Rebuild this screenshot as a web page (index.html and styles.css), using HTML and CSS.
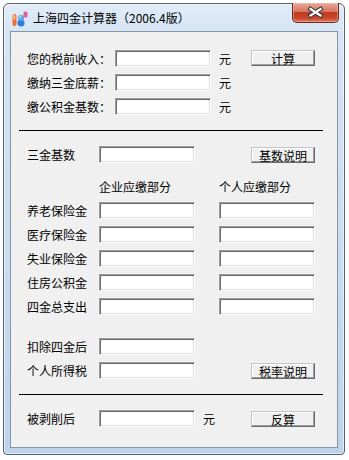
FILE: index.html
```html
<!DOCTYPE html>
<html lang="zh-CN">
<head>
<meta charset="utf-8">
<title>上海四金计算器</title>
<link rel="stylesheet" href="styles.css">
</head>
<body>
<div class="window">
  <div class="titlebar">
    <svg class="app-icon" width="16" height="16" viewBox="0 0 16 16">
      <rect x="0.5" y="3" width="4" height="12" rx="2" fill="#ef6a3a"/>
      <rect x="1.3" y="4" width="2" height="5" rx="1" fill="#ffc07a"/>
      <circle cx="9" cy="12" r="3.6" fill="#2f7fd6"/>
      <circle cx="9" cy="7" r="3" fill="#5aa6ea"/>
      <circle cx="8.2" cy="6.2" r="1" fill="#cfe6fb"/>
      <rect x="11.5" y="0.5" width="4" height="6" rx="1.5" fill="#e0609a"/>
    </svg>
    <span class="title">上海四金计算器（2006.4版）</span>
    <div class="close">
      <svg width="47" height="20" viewBox="0 0 47 20">
        <path d="M18.5 6 L28.5 12.5 M28.5 6 L18.5 12.5" stroke="#3b3b3b" stroke-width="4.4" stroke-linecap="square" fill="none"/>
        <path d="M18.5 6 L28.5 12.5 M28.5 6 L18.5 12.5" stroke="#ffffff" stroke-width="2.2" stroke-linecap="square" fill="none"/>
      </svg>
    </div>
  </div>
  <div class="client">
    <div class="sec-a">
      <div class="row-a"><span class="lbl">您的税前收入：</span><input class="edit" type="text"><span class="unit">元</span><button class="btn">计算</button></div>
      <div class="row-a"><span class="lbl">缴纳三金底薪：</span><input class="edit" type="text"><span class="unit">元</span></div>
      <div class="row-a"><span class="lbl">缴公积金基数：</span><input class="edit" type="text"><span class="unit">元</span></div>
    </div>
    <div class="sep"></div>
    <div class="sec-b">
      <div class="row"><span class="lbl">三金基数</span><input class="edit" type="text"><span></span><button class="btn btn-end">基数说明</button></div>
      <div class="row row-head"><span></span><span class="lbl">企业应缴部分</span><span></span><span class="lbl">个人应缴部分</span></div>
      <div class="row"><span class="lbl">养老保险金</span><input class="edit" type="text"><span></span><input class="edit" type="text"></div>
      <div class="row"><span class="lbl">医疗保险金</span><input class="edit" type="text"><span></span><input class="edit" type="text"></div>
      <div class="row"><span class="lbl">失业保险金</span><input class="edit" type="text"><span></span><input class="edit" type="text"></div>
      <div class="row"><span class="lbl">住房公积金</span><input class="edit" type="text"><span></span><input class="edit" type="text"></div>
      <div class="row"><span class="lbl">四金总支出</span><input class="edit" type="text"><span></span><input class="edit" type="text"></div>
      <div class="row row-gap"><span class="lbl">扣除四金后</span><input class="edit" type="text"></div>
      <div class="row"><span class="lbl">个人所得税</span><input class="edit" type="text"><span></span><button class="btn btn-end">税率说明</button></div>
    </div>
    <div class="sep"></div>
    <div class="sec-c">
      <div class="row-c"><span class="lbl">被剥削后</span><input class="edit" type="text"><span class="unit">元</span><button class="btn">反算</button></div>
    </div>
  </div>
</div>
</body>
</html>
```
FILE: styles.css
```css
* { box-sizing: border-box; }
html, body {
  margin: 0;
  padding: 0;
  background: #ffffff;
}
body {
  font-family: "Noto Sans CJK SC", "Noto Sans", sans-serif;
  font-size: 12px;
  color: #000;
}
.window {
  margin: 3px 0 0 3px;
  width: 342px;
  height: 452px;
  border: 1px solid #56616e;
  border-radius: 6px 6px 4px 4px;
  background: linear-gradient(#e1ecf8 0, #d6e4f4 28px, #c9dbef 60%, #bdd3ec 100%);
  display: flex;
  flex-direction: column;
  box-shadow: inset 0 0 0 1px rgba(255,255,255,0.6);
}
.titlebar {
  height: 27px;
  display: flex;
  align-items: center;
  padding-left: 8px;
  flex: none;
}
.app-icon { flex: none; margin-top: 2px; }
.title {
  margin-left: 5px;
  font-size: 12px;
  line-height: 16px;
  color: #000;
  white-space: nowrap;
}
.close {
  margin-left: auto;
  margin-right: 5px;
  align-self: flex-start;
  margin-top: -1px;
  width: 47px;
  height: 20px;
  border: 1px solid #6b2b20;
  border-top: none;
  border-radius: 0 0 5px 5px;
  background: linear-gradient(#e6a898 0%, #d77763 45%, #c2391f 50%, #c8472d 80%, #e07b5e 100%);
  box-shadow: inset 0 0 0 1px rgba(255,200,190,0.45);
  position: relative;
}
.close svg {
  position: absolute;
  left: -1px;
  top: 0;
}
.client {
  margin: 0 6px;
  height: 417px;
  border: 1px solid #8196ad;
  background: #f0f0f0;
  padding: 18px 0 0 16px;
  flex: none;
}
.sec-a, .sec-b, .sec-c {
  display: flex;
  flex-direction: column;
  gap: 7px;
}
.row-a, .row, .row-c {
  display: grid;
  height: 17px;
  align-items: center;
}
.row-a { grid-template-columns: 88px 96px 40px 64px; }
.row { grid-template-columns: 72px 96px 24px 96px; }
.row-c { grid-template-columns: 72px 96px 56px 64px; }
.row-head { margin-top: 8px; }
.row-gap { margin-top: 16px; }
.lbl {
  white-space: nowrap;
  line-height: 17px;
}
.unit {
  padding-left: 8px;
  line-height: 17px;
}
.edit {
  width: 96px;
  height: 17px;
  margin: 0;
  padding: 0 2px;
  border: 1px solid;
  border-color: #a0a0a0 #ffffff #ffffff #a0a0a0;
  box-shadow: inset 1px 1px 0 #696969, inset -1px -1px 0 #e3e3e3;
  background: #ffffff;
  font: inherit;
  outline: none;
}
.btn {
  width: 64px;
  height: 16px;
  margin: 0;
  padding: 0;
  border: 1px solid;
  border-color: #c4c4c4 #696969 #696969 #c4c4c4;
  box-shadow: inset -1px -1px 0 #a0a0a0, inset 1px 1px 0 #ffffff;
  background: #f0f0f0;
  font: inherit;
  font-size: 12px;
  line-height: 13px;
  color: #000;
  align-self: start;
  margin-top: 1px;
}
.row-a .btn { margin-top: 0; }
.btn-end { justify-self: end; }
.sep {
  margin: 15px 0 15px -8px;
  width: 304px;
  height: 1px;
  background: #000;
  flex: none;
}
```
